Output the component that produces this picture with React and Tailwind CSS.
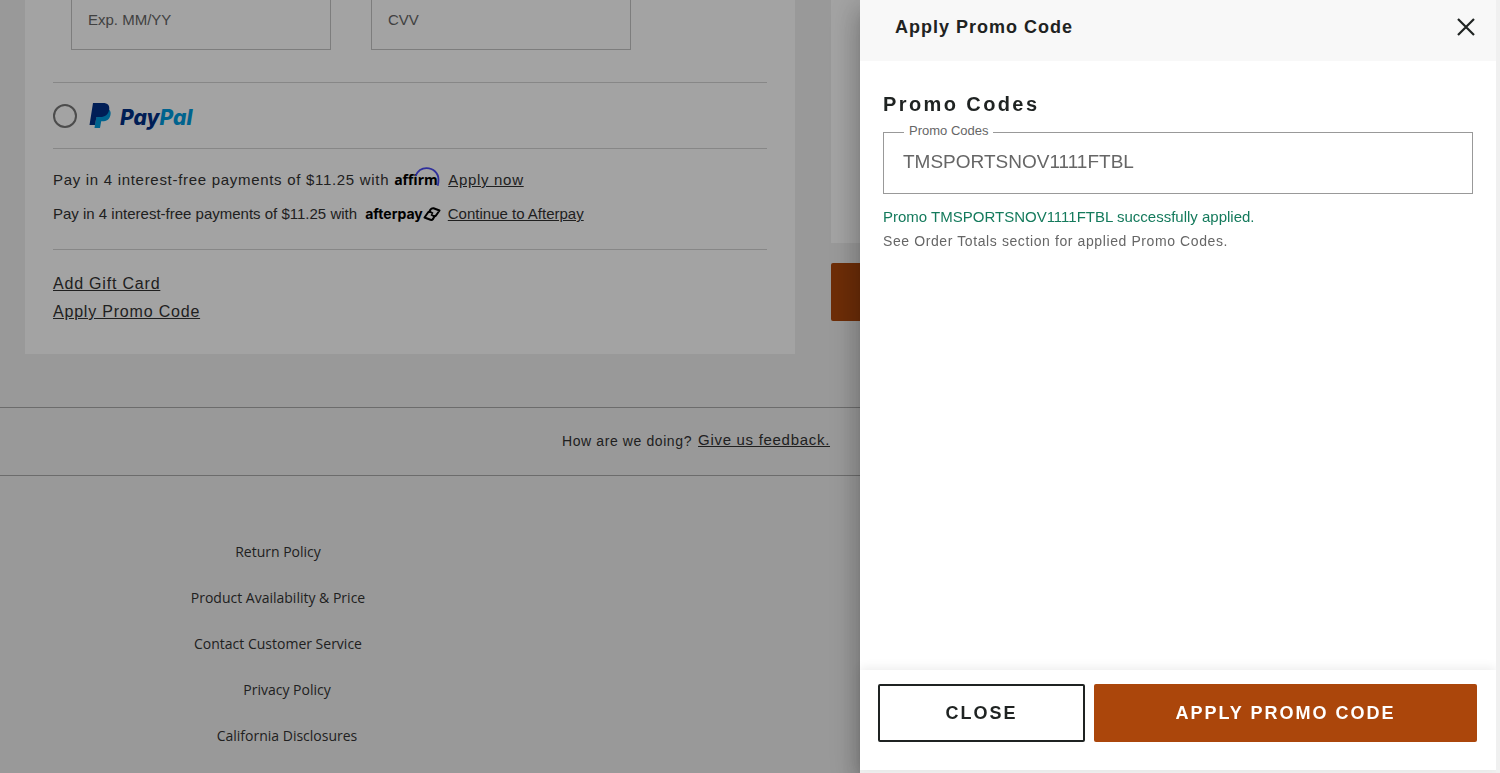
const policyLinks = ['Return Policy', 'Product Availability & Price', 'Contact Customer Service']
const legalLinks = ['Privacy Policy', 'California Disclosures']

function PayPalLogo() {
  return (
    <span className="flex items-center gap-2">
      <svg width="23" height="27" viewBox="0 0 23 27" aria-hidden="true">
        <path d="M18.5 6.5c3 1.3 3.700 4 2.800 7.200-1 3.800-3.800 5.500-7.800 5.500h-1.300l-1.200 6.800H5.500l.8-5.500L9 7z" fill="#009cde" />
        <path d="M4 1h9.800c5 0 7.200 2.500 6.300 7-.9 4.800-4 7-8.800 7H7.500L5.900 23H.5z" fill="#003087" />
      </svg>
      <span className="pt-1 font-['Inter',sans-serif] text-[21px] leading-none font-extrabold italic text-[#003087]">
        Pay<span className="text-[#009cde]">Pal</span>
      </span>
    </span>
  )
}

function AffirmLogo() {
  return (
    <span className="relative mr-1 inline-block w-[46px] font-['Open_Sans',sans-serif] text-sm leading-none font-bold tracking-normal text-black">
      affirm
      <svg className="absolute -top-[6px] right-0" width="26" height="20" viewBox="0 0 26 20" aria-hidden="true">
        <path d="M1.500 9C3.500 4.500 7.500 1.200 12.500 1.200c7 0 12 5 12 11.500 0 2-.2 4-.8 6" fill="none" stroke="#4a4af4" strokeWidth="1.800" />
      </svg>
    </span>
  )
}

function AfterpayLogo() {
  return (
    <span className="mr-[7px] ml-1 inline-flex items-center font-['Inter',sans-serif] text-sm leading-none font-bold text-black">
      afterpay
      <svg width="18" height="16" viewBox="0 0 18 16" fill="none" stroke="black" strokeWidth="2" strokeLinejoin="round" aria-hidden="true">
        <path d="M6 6.500 7.500 3.500Q8.500 2 10.500 2.200L16.500 4.500 13 9.500Q12 10.500 10.500 10L8 8.500" />
        <path d="M12 9.500 10 13Q9 14.200 7.500 13.800L1.500 11.500 5 6.500Q6 5.500 7.500 6L10 7.500" />
      </svg>
    </span>
  )
}

function PaymentCard() {
  return (
    <section className="bg-white px-7 pb-7 text-[15px] text-[#333]">
      <div className="flex gap-10 px-[18px]">
        <input
          aria-label="Expiration date"
          placeholder="Exp. MM/YY"
          className="h-[50px] w-[260px] border border-t-0 border-[#c4c4c4] px-4 pb-[10px] placeholder:text-[#666]"
        />
        <input
          aria-label="Security code"
          placeholder="CVV"
          className="h-[50px] w-[260px] border border-t-0 border-[#c4c4c4] px-4 pb-[10px] placeholder:text-[#666]"
        />
      </div>
      <label className="mt-8 flex h-[67px] items-center gap-3 border-y border-[#d4d4d4]">
        <input type="radio" name="payment" className="size-6 appearance-none rounded-full border-2 border-[#777]" />
        <PayPalLogo />
      </label>
      <div className="mt-[15px] space-y-[2px]">
        <p className="h-8 leading-8 tracking-[0.7px] whitespace-nowrap">
          Pay in 4 interest-free payments of $11.25 with <AffirmLogo />{' '}
          <a href="#" className="underline">Apply now</a>
        </p>
        <p className="h-8 leading-8 whitespace-nowrap">
          Pay in 4 interest-free payments of $11.25 with <AfterpayLogo />
          <a href="#" className="underline">Continue to Afterpay</a>
        </p>
      </div>
      <div className="mt-[19px] flex flex-col items-start border-t border-[#d4d4d4] pt-5 text-base leading-7 tracking-[0.8px]">
        <a href="#" className="underline">Add Gift Card</a>
        <a href="#" className="underline">Apply Promo Code</a>
      </div>
    </section>
  )
}

function Page() {
  return (
    <div className="h-full overflow-hidden bg-[#f0f0f0] text-[#333]">
      <main className="grid grid-cols-[6fr_5fr] items-start gap-9 pr-6 pb-[53px] pl-[25px]">
        <PaymentCard />
        <aside>
          <div className="h-[243px] bg-white" />
          <button className="mt-5 h-[58px] w-full rounded-xs bg-[#ab460b] font-bold tracking-widest text-white">
            PLACE ORDER
          </button>
        </aside>
      </main>
      <div className="flex h-[69px] items-center justify-center gap-[6px] border-y border-[#aaa] pr-[104px] pb-[2px]">
        <span className="text-sm tracking-[0.6px]">How are we doing?</span>
        <a href="#" className="text-[15px] tracking-[0.7px] underline">Give us feedback.</a>
      </div>
      <footer className="w-[556px] pt-[53px] font-['Open_Sans',sans-serif] text-sm">
        <ul className="text-center leading-[46px]">
          {policyLinks.map((name) => (
            <li key={name}><a href="#">{name}</a></li>
          ))}
        </ul>
        <ul className="pl-[18px] text-center leading-[46px]">
          {legalLinks.map((name) => (
            <li key={name}><a href="#">{name}</a></li>
          ))}
        </ul>
      </footer>
    </div>
  )
}

function PromoDrawer() {
  return (
    <div
      role="dialog"
      aria-labelledby="drawer-title"
      className="fixed inset-y-0 right-1 flex w-[636px] flex-col border-b-[3px] border-[#f0f0f0] bg-white shadow-[0_8px_10px_-5px_rgba(0,0,0,0.2),0_16px_24px_2px_rgba(0,0,0,0.14),0_6px_30px_5px_rgba(0,0,0,0.16)]"
    >
      <header className="flex h-[61px] items-center justify-between bg-[#f8f8f8] pr-[18px] pb-2 pl-[35px]">
        <h2 id="drawer-title" className="text-lg font-bold tracking-[1px] text-[#1f2322]">Apply Promo Code</h2>
        <button aria-label="Close drawer">
          <svg width="24" height="24" viewBox="0 0 24 24" stroke="#1f2322" strokeWidth="2.200" aria-hidden="true">
            <path d="M4 4l16 16M20 4L4 20" />
          </svg>
        </button>
      </header>
      <div className="flex-1 pt-[27px] pr-[23px] pl-[23px] text-[#666]">
        <h3 className="text-xl leading-8 font-bold tracking-[0.12em] text-[#1f2322]">Promo Codes</h3>
        <div className="relative mt-3">
          <label htmlFor="promo" className="absolute -top-[11px] left-[21px] bg-white px-[5px] text-[13px] leading-5">
            Promo Codes
          </label>
          <input
            id="promo"
            defaultValue="TMSPORTSNOV1111FTBL"
            className="h-[62px] w-full border border-[#999] px-[19px] pb-[2px] text-[19px]"
          />
        </div>
        <p className="mt-[11px] text-[15px] leading-6 text-[#147a5c]">Promo TMSPORTSNOV1111FTBL successfully applied.</p>
        <p className="text-sm leading-6 tracking-[0.6px]">See Order Totals section for applied Promo Codes.</p>
      </div>
      <footer className="flex h-[100px] gap-[9px] pt-[14px] pr-[19px] pl-[18px] text-lg font-bold tracking-[2px] shadow-[0_-2px_10px_rgba(0,0,0,0.08)]">
        <button className="h-[58px] w-[207px] rounded-xs border-2 border-[#1f2322] text-[#1f2322]">CLOSE</button>
        <button className="h-[58px] flex-1 rounded-xs bg-[#ab460b] text-white">APPLY PROMO CODE</button>
      </footer>
    </div>
  )
}

export default function App() {
  return (
    <div className="h-screen bg-[#f0f0f0] pr-1 font-['Liberation_Sans',Arial,sans-serif]">
      <Page />
      <div className="fixed inset-y-0 right-1 left-0 bg-black/36" />
      <PromoDrawer />
      <div className="fixed inset-y-0 right-0 w-1 bg-[#f0f0f0]" />
    </div>
  )
}
